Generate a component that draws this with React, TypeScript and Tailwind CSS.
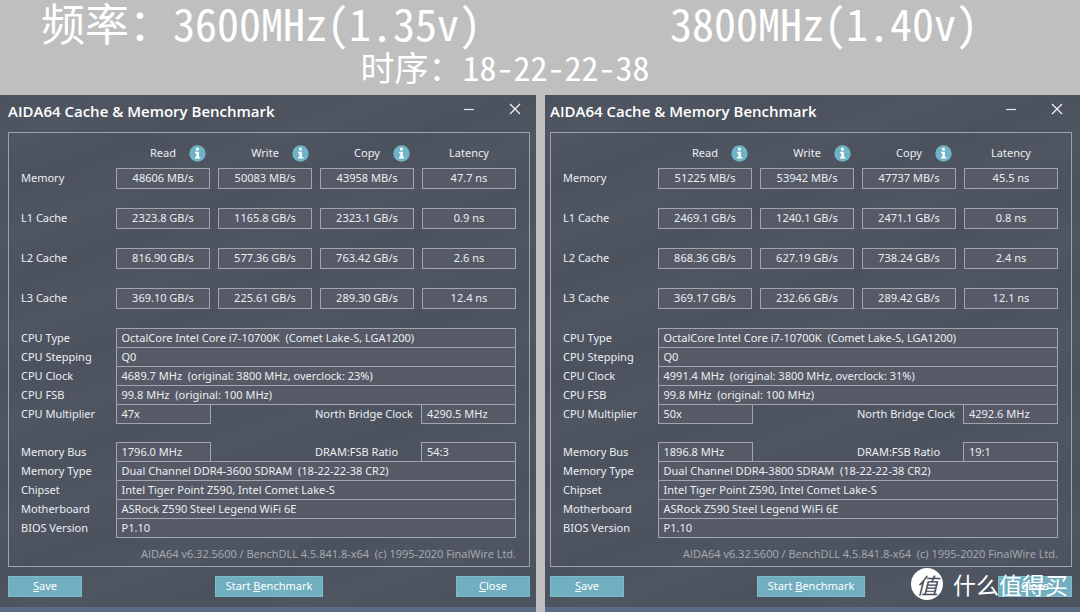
import React from "react";

type Bench = {
  rows: { label: string; values: string[] }[];
  cpu: { label: string; value: string }[];
  multiplier: string;
  northBridge: string;
  memoryBus: string;
  ratio: string;
  memory: { label: string; value: string }[];
};

const left: Bench = {
  rows: [
    { label: "Memory", values: ["48606 MB/s", "50083 MB/s", "43958 MB/s", "47.7 ns"] },
    { label: "L1 Cache", values: ["2323.8 GB/s", "1165.8 GB/s", "2323.1 GB/s", "0.9 ns"] },
    { label: "L2 Cache", values: ["816.90 GB/s", "577.36 GB/s", "763.42 GB/s", "2.6 ns"] },
    { label: "L3 Cache", values: ["369.10 GB/s", "225.61 GB/s", "289.30 GB/s", "12.4 ns"] },
  ],
  cpu: [
    { label: "CPU Type", value: "OctalCore Intel Core i7-10700K  (Comet Lake-S, LGA1200)" },
    { label: "CPU Stepping", value: "Q0" },
    { label: "CPU Clock", value: "4689.7 MHz  (original: 3800 MHz, overclock: 23%)" },
    { label: "CPU FSB", value: "99.8 MHz  (original: 100 MHz)" },
  ],
  multiplier: "47x",
  northBridge: "4290.5 MHz",
  memoryBus: "1796.0 MHz",
  ratio: "54:3",
  memory: [
    { label: "Memory Type", value: "Dual Channel DDR4-3600 SDRAM  (18-22-22-38 CR2)" },
    { label: "Chipset", value: "Intel Tiger Point Z590, Intel Comet Lake-S" },
    { label: "Motherboard", value: "ASRock Z590 Steel Legend WiFi 6E" },
    { label: "BIOS Version", value: "P1.10" },
  ],
};

const right: Bench = {
  rows: [
    { label: "Memory", values: ["51225 MB/s", "53942 MB/s", "47737 MB/s", "45.5 ns"] },
    { label: "L1 Cache", values: ["2469.1 GB/s", "1240.1 GB/s", "2471.1 GB/s", "0.8 ns"] },
    { label: "L2 Cache", values: ["868.36 GB/s", "627.19 GB/s", "738.24 GB/s", "2.4 ns"] },
    { label: "L3 Cache", values: ["369.17 GB/s", "232.66 GB/s", "289.42 GB/s", "12.1 ns"] },
  ],
  cpu: [
    { label: "CPU Type", value: "OctalCore Intel Core i7-10700K  (Comet Lake-S, LGA1200)" },
    { label: "CPU Stepping", value: "Q0" },
    { label: "CPU Clock", value: "4991.4 MHz  (original: 3800 MHz, overclock: 31%)" },
    { label: "CPU FSB", value: "99.8 MHz  (original: 100 MHz)" },
  ],
  multiplier: "50x",
  northBridge: "4292.6 MHz",
  memoryBus: "1896.8 MHz",
  ratio: "19:1",
  memory: [
    { label: "Memory Type", value: "Dual Channel DDR4-3800 SDRAM  (18-22-22-38 CR2)" },
    { label: "Chipset", value: "Intel Tiger Point Z590, Intel Comet Lake-S" },
    { label: "Motherboard", value: "ASRock Z590 Steel Legend WiFi 6E" },
    { label: "BIOS Version", value: "P1.10" },
  ],
};

const boxed = "border border-[#a1a5ae] bg-[#555a66] px-[5px] whitespace-pre";

function InfoIcon() {
  return (
    <svg viewBox="0 0 17 17" className="size-[17px]" aria-hidden="true">
      <circle cx="8.5" cy="8.5" r="8.2" fill="#6fb3c6" />
      <circle cx="8.4" cy="4.1" r="1.6" fill="#fff" />
      <path d="M6 6.7h3.9v5.2h1.4v1.5H5.9v-1.5h1.4V8.2H6z" fill="#fff" />
    </svg>
  );
}

function Columns() {
  return (
    <colgroup>
      <col className="w-[95px]" />
      <col className="w-[94px]" />
      <col />
      <col className="w-[94px]" />
    </colgroup>
  );
}

function PairRow(props: { label: string; value: string; label2: string; value2: string }) {
  return (
    <tr className="h-[19px]">
      <th scope="row" className="text-left font-normal">{props.label}</th>
      <td className={boxed}>{props.value}</td>
      <th scope="row" className="font-normal">
        <span className="ml-auto block w-[106px] text-left whitespace-nowrap">{props.label2}</span>
      </th>
      <td className={boxed}>{props.value2}</td>
    </tr>
  );
}

function WideRow({ label, value }: { label: string; value: string }) {
  return (
    <tr className="h-[19px]">
      <th scope="row" className="text-left font-normal">{label}</th>
      <td colSpan={3} className={boxed}>{value}</td>
    </tr>
  );
}

function ActionButton({ before = "", mnemonic, after, className }: { before?: string; mnemonic: string; after: string; className: string }) {
  return (
    <button type="button" className={`h-[21px] border border-[#7dbccb] bg-[#70aec0] pb-0.5 text-white ${className}`}>
      {before}
      <u>{mnemonic}</u>
      {after}
    </button>
  );
}

function BenchWindow({ data, className }: { data: Bench; className: string }) {
  return (
    <section
      className={`border-b-[5px] border-[#5b6a86] bg-[#4c535f] bg-[repeating-linear-gradient(160deg,#4b525e_0px,#4f5662_45px,#4b525e_90px)] pb-[10px] font-['Noto_Sans',sans-serif] text-[11px] leading-[16px] text-[#eceef1] ${className}`}
    >
      <div className="flex h-[37px] items-start justify-between">
        <h2 className="pt-[6px] font-['Open_Sans',sans-serif] text-[15px] leading-5 font-semibold text-white">AIDA64 Cache &amp; Memory Benchmark</h2>
        <div className="flex gap-[34px] pt-2 pr-[9px]">
          <button type="button" aria-label="Minimize" className="size-3">
            <svg viewBox="0 0 12 12" className="size-3"><path d="M1 6.5h10" stroke="#e4e6ea" strokeWidth="1.2" /></svg>
          </button>
          <button type="button" aria-label="Close window" className="size-3">
            <svg viewBox="0 0 12 12" className="size-3"><path d="M1 1l10 10M11 1L1 11" stroke="#f0f1f3" strokeWidth="1.3" /></svg>
          </button>
        </div>
      </div>

      <div className="border border-[#9da2ab] pt-[10px] pr-[13px] pb-1 pl-3">
        <table className="w-full table-fixed">
          <colgroup>
            <col className="w-[87px]" />
            <col />
            <col />
            <col />
            <col />
          </colgroup>
          <thead>
            <tr className="h-5">
              <td />
              {["Read", "Write", "Copy"].map((name) => (
                <th key={name} scope="col" className="pl-2 font-normal">
                  <span className="grid grid-cols-[1fr_auto_1fr] items-center gap-[13px]">
                    <span />
                    <span>{name}</span>
                    <InfoIcon />
                  </span>
                </th>
              ))}
              <th scope="col" className="pl-2 font-normal">Latency</th>
            </tr>
          </thead>
          <tbody>
            {data.rows.map((row) => (
              <tr key={row.label} className="h-10 align-top">
                <th scope="row" className="pt-[7px] text-left font-normal">{row.label}</th>
                {row.values.map((value) => (
                  <td key={value} className="pt-[5px] pl-2">
                    <div className="h-[21px] border border-[#a1a5ae] bg-[#555a66] text-center leading-[18px]">{value}</div>
                  </td>
                ))}
              </tr>
            ))}
          </tbody>
        </table>

        <table className="mt-[5px] w-full table-fixed border-collapse">
          <Columns />
          <tbody>
            {data.cpu.map((row) => <WideRow key={row.label} {...row} />)}
            <PairRow label="CPU Multiplier" value={data.multiplier} label2="North Bridge Clock" value2={data.northBridge} />
          </tbody>
        </table>

        <table className="mt-[18px] w-full table-fixed border-collapse">
          <Columns />
          <tbody>
            <PairRow label="Memory Bus" value={data.memoryBus} label2="DRAM:FSB Ratio" value2={data.ratio} />
            {data.memory.map((row) => <WideRow key={row.label} {...row} />)}
          </tbody>
        </table>

        <p className="mt-2 text-right font-['Open_Sans',sans-serif] whitespace-pre text-[#a9adb3]">
          {"AIDA64 v6.32.5600 / BenchDLL 4.5.841.8-x64  (c) 1995-2020 FinalWire Ltd."}
        </p>
      </div>

      <div className="mt-[9px] flex justify-between">
        <ActionButton mnemonic="S" after="ave" className="w-[74px]" />
        <ActionButton before="Start " mnemonic="B" after="enchmark" className="w-[108px]" />
        <ActionButton mnemonic="C" after="lose" className="w-[74px]" />
      </div>
    </section>
  );
}

export default function App() {
  return (
    <main className="relative bg-[#bfbfbf]">
      <header className="pb-[5px] font-['Noto_Sans_CJK_SC',sans-serif] text-white [font-feature-settings:'hwid']">
        <div className="grid grid-cols-[536fr_535fr] gap-[9px] text-[44px] leading-[44px] whitespace-nowrap">
          <h1 className="pl-[41px]">频率：3600MHz(1.35v)</h1>
          <h1 className="pl-[125px]">3800MHz(1.40v)</h1>
        </div>
        <p className="pr-[70px] text-center text-[34px] leading-[46px]">时序：18-22-22-38</p>
      </header>
      <div className="grid grid-cols-[536fr_535fr] gap-[9px]">
        <BenchWindow data={left} className="pr-[6px] pl-2" />
        <BenchWindow data={right} className="pr-2 pl-[5px]" />
      </div>
      <div className="pointer-events-none absolute right-3 bottom-3 flex items-center gap-[10px] font-['Noto_Sans_CJK_SC',sans-serif] text-white">
        <span className="flex size-8 items-center justify-center rounded-full bg-white text-[22px] leading-8 text-[#454b57] italic">值</span>
        <span className="text-[23px] leading-8">什么值得买</span>
      </div>
    </main>
  );
}
